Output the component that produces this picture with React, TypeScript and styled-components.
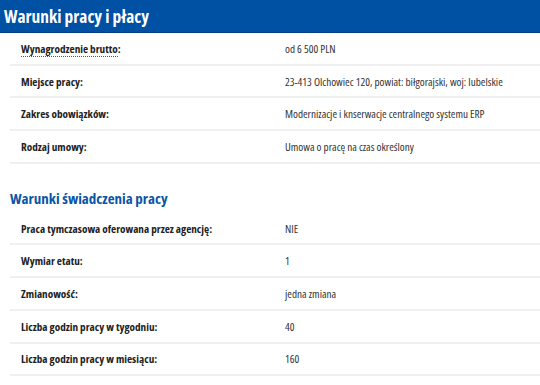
import React from "react";
import styled, { createGlobalStyle } from "styled-components";

const Global = createGlobalStyle`
  html, body { margin: 0; padding: 0; background: #fff; }
  body { font-family: "Open Sans", "Liberation Sans", sans-serif; color: #333; font-stretch: 75%; }
`;

const Page = styled.div`
  width: 540px;
  display: flex;
  flex-direction: column;
`;

const Header = styled.div`
  height: 33px;
  background: #0050a3;
  border-bottom: 1px solid #003f87;
  box-sizing: border-box;
  display: flex;
  align-items: center;
  padding-left: 4px;
`;

const Title = styled.h2`
  margin: 0;
  color: #fff;
  font-size: 17.4px;
  font-weight: 700;
  font-stretch: 75%;
`;

const SectionTitle = styled.h3`
  margin: 23px 0 4px 10px;
  color: #0a55a6;
  font-size: 15px;
  font-weight: 700;
  line-height: 22px;
  font-stretch: 75%;
`;

const Table = styled.div`
  margin-left: 10px;
  display: flex;
  flex-direction: column;
`;

const Row = styled.div`
  display: grid;
  grid-template-columns: 275px 1fr;
  align-items: center;
  height: 32.7px;
  box-sizing: border-box;
  border-bottom: 2px solid #f0f0f0;
`;

const Label = styled.div`
  padding-left: 11px;
  font-size: 11.2px;
  font-weight: 700;
  color: #222;
  font-stretch: 75%;
`;

const Abbr = styled.span`
  border-bottom: 1px dotted #555;
`;

const Value = styled.div`
  font-size: 11.2px;
  color: #333;
  font-stretch: 75%;
  white-space: nowrap;
`;

const first = [
  ["Wynagrodzenie brutto:", "od 6 500 PLN", true],
  ["Miejsce pracy:", "23-413 Olchowiec 120, powiat: biłgorajski, woj: lubelskie", false],
  ["Zakres obowiązków:", "Modernizacje i knserwacje centralnego systemu ERP", false],
  ["Rodzaj umowy:", "Umowa o pracę na czas określony", false],
] as const;

const second = [
  ["Praca tymczasowa oferowana przez agencję:", "NIE"],
  ["Wymiar etatu:", "1"],
  ["Zmianowość:", "jedna zmiana"],
  ["Liczba godzin pracy w tygodniu:", "40"],
  ["Liczba godzin pracy w miesiącu:", "160"],
];

export default function App() {
  return (
    <Page>
      <Global />
      <Header>
        <Title>Warunki pracy i płacy</Title>
      </Header>
      <Table>
        {first.map(([l, v, abbr]) => (
          <Row key={l}>
            <Label>{abbr ? <Abbr>{l.replace(":", "")}</Abbr> : l.replace(":", "")}:</Label>
            <Value>{v}</Value>
          </Row>
        ))}
      </Table>
      <SectionTitle>Warunki świadczenia pracy</SectionTitle>
      <Table>
        {second.map(([l, v]) => (
          <Row key={l}>
            <Label>{l}</Label>
            <Value>{v}</Value>
          </Row>
        ))}
      </Table>
    </Page>
  );
}
